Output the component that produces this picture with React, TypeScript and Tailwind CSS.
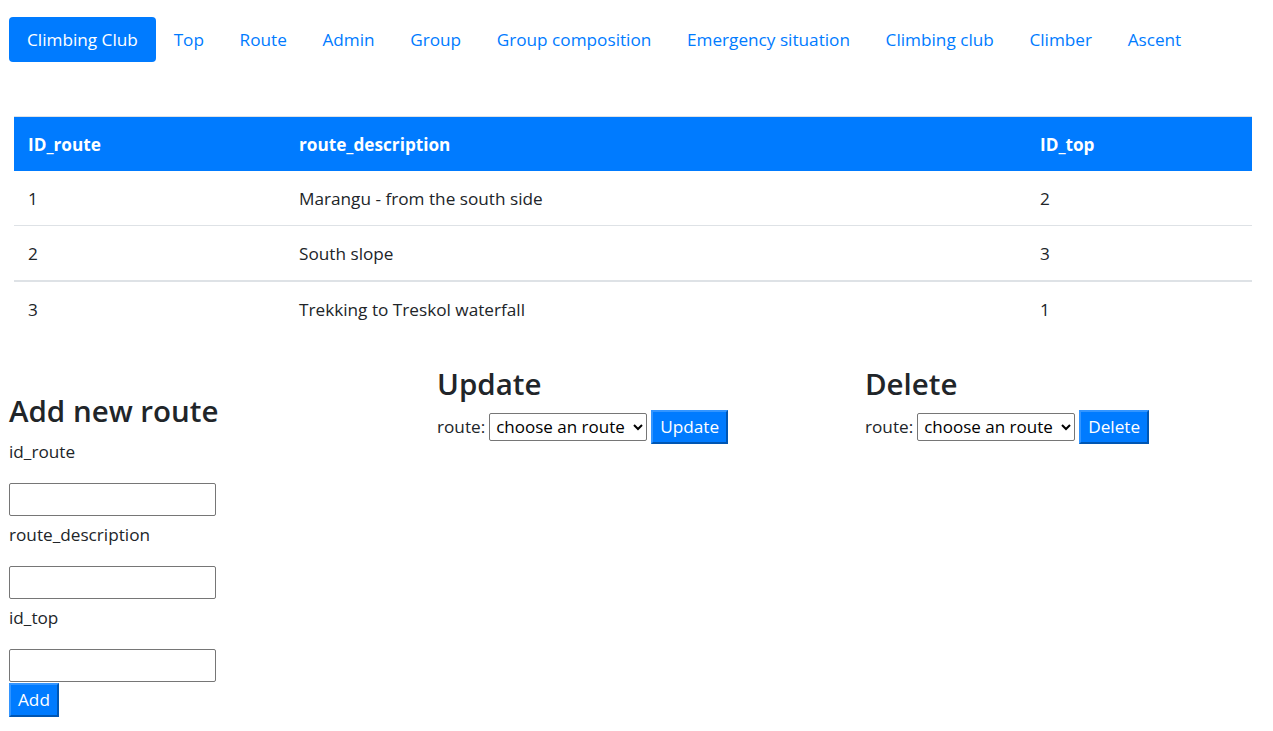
import React from "react";

const navItems = ["Top", "Route", "Admin", "Group", "Group composition", "Emergency situation", "Climbing club", "Climber", "Ascent"];
const rows = [
  ["1", "Marangu - from the south side", "2"],
  ["2", "South slope", "3"],
  ["3", "Trekking to Treskol waterfall", "1"],
];

function Btn({ children }: { children: React.ReactNode }) {
  return (
    <button className="bg-[#007bff] text-white text-[17.2px] leading-[27px] px-[7px] h-[34px] border-2 border-t-[#3395ff] border-l-[#3395ff] border-r-[#0056b3] border-b-[#0056b3]">
      {children}
    </button>
  );
}

function Sel() {
  return (
    <select className="h-[28px] border border-[#767676] rounded-[2px] bg-white text-black text-[17px] pl-[2px] pr-[2px] w-[158px]">
      <option>choose an route</option>
    </select>
  );
}

export default function App() {
  return (
    <div className="min-h-[731px] bg-white text-[#212529] text-[17.2px] leading-[26px]" style={{ fontFamily: '"Open Sans", "Noto Sans", sans-serif' }}>
      <nav className="flex items-center pl-[9px] pt-[17px]">
        <a className="bg-[#007bff] text-white rounded-[4px] px-[18px] h-[45px] flex items-center">Climbing Club</a>
        {navItems.map((n) => (
          <a key={n} className="text-[#007bff] px-[17.8px] h-[45px] flex items-center">{n}</a>
        ))}
      </nav>
      <div className="mt-[54px] ml-[14px] mr-[21px]">
        <table className="w-full border-collapse border-t border-[#dee2e6]">
          <thead>
            <tr className="bg-[#007bff] text-white">
              <th className="text-left font-bold w-[271px] h-[54px] px-[14px] pt-[2px]">ID_route</th>
              <th className="text-left font-bold w-[741px] px-[14px] pt-[2px]">route_description</th>
              <th className="text-left font-bold px-[14px] pt-[2px]">ID_top</th>
            </tr>
          </thead>
          <tbody>
            {rows.map((r, i) => (
              <tr key={i} className={i === 1 ? "border-b-2 border-[#dee2e6]" : i === 0 ? "border-b border-[#dee2e6]" : ""}>
                <td className="px-[14px] h-[55px] pt-[2px]">{r[0]}</td>
                <td className="px-[14px] pt-[2px]">{r[1]}</td>
                <td className="px-[14px] pt-[2px]">{r[2]}</td>
              </tr>
            ))}
          </tbody>
        </table>
      </div>
      <div className="flex pl-[9px] pt-[28px]">
        <div className="w-[428px] shrink-0 pt-[27px]">
          <h2 className="text-[29.5px] leading-[40px] font-semibold">Add new route</h2>
          <div className="mt-[8px]">id_route</div>
          <input className="mt-[18px] block w-[207px] h-[33px] border border-[#767676] rounded-[2px]" />
          <div className="mt-[6px]">route_description</div>
          <input className="mt-[18px] block w-[207px] h-[33px] border border-[#767676] rounded-[2px]" />
          <div className="mt-[6px]">id_top</div>
          <input className="mt-[18px] block w-[207px] h-[33px] border border-[#767676] rounded-[2px]" />
          <div className="mt-[1px]"><Btn>Add</Btn></div>
        </div>
        <div className="w-[428px] shrink-0">
          <h2 className="text-[29.5px] leading-[40px] font-semibold">Update</h2>
          <div className="flex items-center gap-[4px] mt-[6px]">
            <span>route:</span>
            <Sel />
            <Btn>Update</Btn>
          </div>
        </div>
        <div className="w-[408px] shrink-0">
          <h2 className="text-[29.5px] leading-[40px] font-semibold">Delete</h2>
          <div className="flex items-center gap-[4px] mt-[6px]">
            <span>route:</span>
            <Sel />
            <Btn>Delete</Btn>
          </div>
        </div>
      </div>
    </div>
  );
}
